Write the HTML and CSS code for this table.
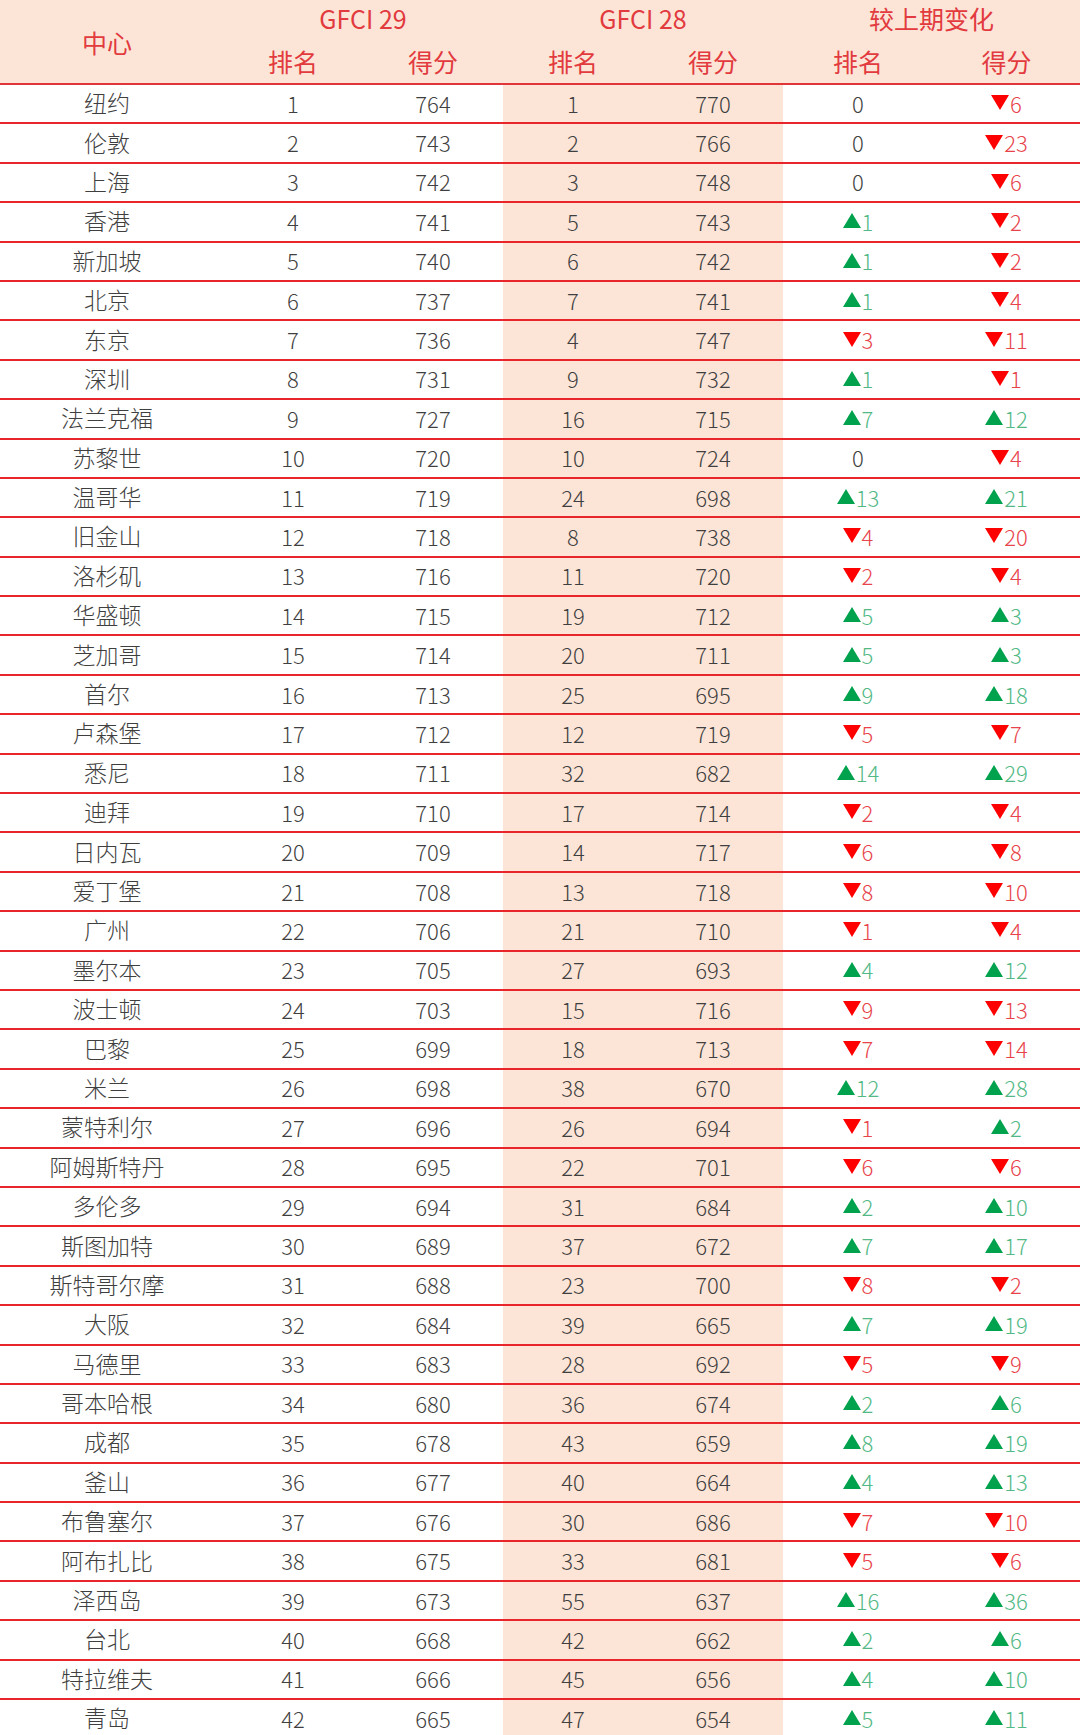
FILE: index.html
```html
<!DOCTYPE html>
<html lang="zh-CN">
<head>
<meta charset="utf-8">
<title>GFCI 29</title>
<link rel="stylesheet" href="styles.css">
</head>
<body>
<div class="table">
  <div class="head">
    <div class="h-center">中心</div>
    <div class="h-group g29">GFCI 29</div>
    <div class="h-group g28">GFCI 28</div>
    <div class="h-group gch">较上期变化</div>
    <div class="h-sub">排名</div>
    <div class="h-sub">得分</div>
    <div class="h-sub">排名</div>
    <div class="h-sub">得分</div>
    <div class="h-sub">排名</div>
    <div class="h-sub">得分</div>
  </div>
  <div class="row"><span>纽约</span><span>1</span><span>764</span><span class="p">1</span><span class="p">770</span><span>0</span><span class="dn">6</span></div>
  <div class="row"><span>伦敦</span><span>2</span><span>743</span><span class="p">2</span><span class="p">766</span><span>0</span><span class="dn">23</span></div>
  <div class="row"><span>上海</span><span>3</span><span>742</span><span class="p">3</span><span class="p">748</span><span>0</span><span class="dn">6</span></div>
  <div class="row"><span>香港</span><span>4</span><span>741</span><span class="p">5</span><span class="p">743</span><span class="up">1</span><span class="dn">2</span></div>
  <div class="row"><span>新加坡</span><span>5</span><span>740</span><span class="p">6</span><span class="p">742</span><span class="up">1</span><span class="dn">2</span></div>
  <div class="row"><span>北京</span><span>6</span><span>737</span><span class="p">7</span><span class="p">741</span><span class="up">1</span><span class="dn">4</span></div>
  <div class="row"><span>东京</span><span>7</span><span>736</span><span class="p">4</span><span class="p">747</span><span class="dn">3</span><span class="dn">11</span></div>
  <div class="row"><span>深圳</span><span>8</span><span>731</span><span class="p">9</span><span class="p">732</span><span class="up">1</span><span class="dn">1</span></div>
  <div class="row"><span>法兰克福</span><span>9</span><span>727</span><span class="p">16</span><span class="p">715</span><span class="up">7</span><span class="up">12</span></div>
  <div class="row"><span>苏黎世</span><span>10</span><span>720</span><span class="p">10</span><span class="p">724</span><span>0</span><span class="dn">4</span></div>
  <div class="row"><span>温哥华</span><span>11</span><span>719</span><span class="p">24</span><span class="p">698</span><span class="up">13</span><span class="up">21</span></div>
  <div class="row"><span>旧金山</span><span>12</span><span>718</span><span class="p">8</span><span class="p">738</span><span class="dn">4</span><span class="dn">20</span></div>
  <div class="row"><span>洛杉矶</span><span>13</span><span>716</span><span class="p">11</span><span class="p">720</span><span class="dn">2</span><span class="dn">4</span></div>
  <div class="row"><span>华盛顿</span><span>14</span><span>715</span><span class="p">19</span><span class="p">712</span><span class="up">5</span><span class="up">3</span></div>
  <div class="row"><span>芝加哥</span><span>15</span><span>714</span><span class="p">20</span><span class="p">711</span><span class="up">5</span><span class="up">3</span></div>
  <div class="row"><span>首尔</span><span>16</span><span>713</span><span class="p">25</span><span class="p">695</span><span class="up">9</span><span class="up">18</span></div>
  <div class="row"><span>卢森堡</span><span>17</span><span>712</span><span class="p">12</span><span class="p">719</span><span class="dn">5</span><span class="dn">7</span></div>
  <div class="row"><span>悉尼</span><span>18</span><span>711</span><span class="p">32</span><span class="p">682</span><span class="up">14</span><span class="up">29</span></div>
  <div class="row"><span>迪拜</span><span>19</span><span>710</span><span class="p">17</span><span class="p">714</span><span class="dn">2</span><span class="dn">4</span></div>
  <div class="row"><span>日内瓦</span><span>20</span><span>709</span><span class="p">14</span><span class="p">717</span><span class="dn">6</span><span class="dn">8</span></div>
  <div class="row"><span>爱丁堡</span><span>21</span><span>708</span><span class="p">13</span><span class="p">718</span><span class="dn">8</span><span class="dn">10</span></div>
  <div class="row"><span>广州</span><span>22</span><span>706</span><span class="p">21</span><span class="p">710</span><span class="dn">1</span><span class="dn">4</span></div>
  <div class="row"><span>墨尔本</span><span>23</span><span>705</span><span class="p">27</span><span class="p">693</span><span class="up">4</span><span class="up">12</span></div>
  <div class="row"><span>波士顿</span><span>24</span><span>703</span><span class="p">15</span><span class="p">716</span><span class="dn">9</span><span class="dn">13</span></div>
  <div class="row"><span>巴黎</span><span>25</span><span>699</span><span class="p">18</span><span class="p">713</span><span class="dn">7</span><span class="dn">14</span></div>
  <div class="row"><span>米兰</span><span>26</span><span>698</span><span class="p">38</span><span class="p">670</span><span class="up">12</span><span class="up">28</span></div>
  <div class="row"><span>蒙特利尔</span><span>27</span><span>696</span><span class="p">26</span><span class="p">694</span><span class="dn">1</span><span class="up">2</span></div>
  <div class="row"><span>阿姆斯特丹</span><span>28</span><span>695</span><span class="p">22</span><span class="p">701</span><span class="dn">6</span><span class="dn">6</span></div>
  <div class="row"><span>多伦多</span><span>29</span><span>694</span><span class="p">31</span><span class="p">684</span><span class="up">2</span><span class="up">10</span></div>
  <div class="row"><span>斯图加特</span><span>30</span><span>689</span><span class="p">37</span><span class="p">672</span><span class="up">7</span><span class="up">17</span></div>
  <div class="row"><span>斯特哥尔摩</span><span>31</span><span>688</span><span class="p">23</span><span class="p">700</span><span class="dn">8</span><span class="dn">2</span></div>
  <div class="row"><span>大阪</span><span>32</span><span>684</span><span class="p">39</span><span class="p">665</span><span class="up">7</span><span class="up">19</span></div>
  <div class="row"><span>马德里</span><span>33</span><span>683</span><span class="p">28</span><span class="p">692</span><span class="dn">5</span><span class="dn">9</span></div>
  <div class="row"><span>哥本哈根</span><span>34</span><span>680</span><span class="p">36</span><span class="p">674</span><span class="up">2</span><span class="up">6</span></div>
  <div class="row"><span>成都</span><span>35</span><span>678</span><span class="p">43</span><span class="p">659</span><span class="up">8</span><span class="up">19</span></div>
  <div class="row"><span>釜山</span><span>36</span><span>677</span><span class="p">40</span><span class="p">664</span><span class="up">4</span><span class="up">13</span></div>
  <div class="row"><span>布鲁塞尔</span><span>37</span><span>676</span><span class="p">30</span><span class="p">686</span><span class="dn">7</span><span class="dn">10</span></div>
  <div class="row"><span>阿布扎比</span><span>38</span><span>675</span><span class="p">33</span><span class="p">681</span><span class="dn">5</span><span class="dn">6</span></div>
  <div class="row"><span>泽西岛</span><span>39</span><span>673</span><span class="p">55</span><span class="p">637</span><span class="up">16</span><span class="up">36</span></div>
  <div class="row"><span>台北</span><span>40</span><span>668</span><span class="p">42</span><span class="p">662</span><span class="up">2</span><span class="up">6</span></div>
  <div class="row"><span>特拉维夫</span><span>41</span><span>666</span><span class="p">45</span><span class="p">656</span><span class="up">4</span><span class="up">10</span></div>
  <div class="row"><span>青岛</span><span>42</span><span>665</span><span class="p">47</span><span class="p">654</span><span class="up">5</span><span class="up">11</span></div>
</div>
</body>
</html>
```
FILE: styles.css
```css
html, body {
  margin: 0;
  padding: 0;
  background: #ffffff;
}

body {
  font-family: "Noto Sans CJK SC", "Noto Sans", sans-serif;
  font-weight: 300;
  color: #3f3f3f;
  overflow: hidden;
}

.table {
  width: 1080px;
}

.head {
  display: grid;
  grid-template-columns: 223px 140px 140px 140px 140px 150px 147px;
  grid-template-rows: 37px 46px;
  background: #fce5d7;
  border-bottom: 2px solid #e0363a;
  color: #e23a3e;
  font-size: 25px;
  font-weight: 400;
}

.head > div {
  display: flex;
  align-items: center;
  justify-content: center;
  line-height: 1;
}

.h-center {
  grid-row: 1 / span 2;
  grid-column: 1;
  padding-top: 1px;
  padding-right: 9px;
}

.g29 { grid-column: 2 / span 2; grid-row: 1; }
.g28 { grid-column: 4 / span 2; grid-row: 1; }
.gch { grid-column: 6 / span 2; grid-row: 1; }

.h-sub {
  grid-row: 2;
  padding-top: 3px;
}

.row {
  display: grid;
  grid-template-columns: 223px 140px 140px 140px 140px 150px 147px;
  height: 39.4px;
  box-sizing: border-box;
  border-bottom: 2px solid #e8252b;
  font-size: 22px;
}

.row > span {
  display: flex;
  align-items: center;
  justify-content: center;
  line-height: 1;
  padding-bottom: 2px;
}

.row > span:first-child {
  font-size: 23px;
  padding-right: 9px;
}

.row > .p {
  background: #fce5d7;
}

.up {
  color: #52b985;
}

.dn {
  color: #e8434a;
}

.up::before,
.dn::before {
  content: "";
  display: inline-block;
  width: 0;
  height: 0;
  border-left: 9px solid transparent;
  border-right: 9px solid transparent;
  margin-right: 1px;
}

.up::before {
  border-bottom: 15px solid #00a24e;
}

.dn::before {
  border-top: 15px solid #ff0000;
}
```
